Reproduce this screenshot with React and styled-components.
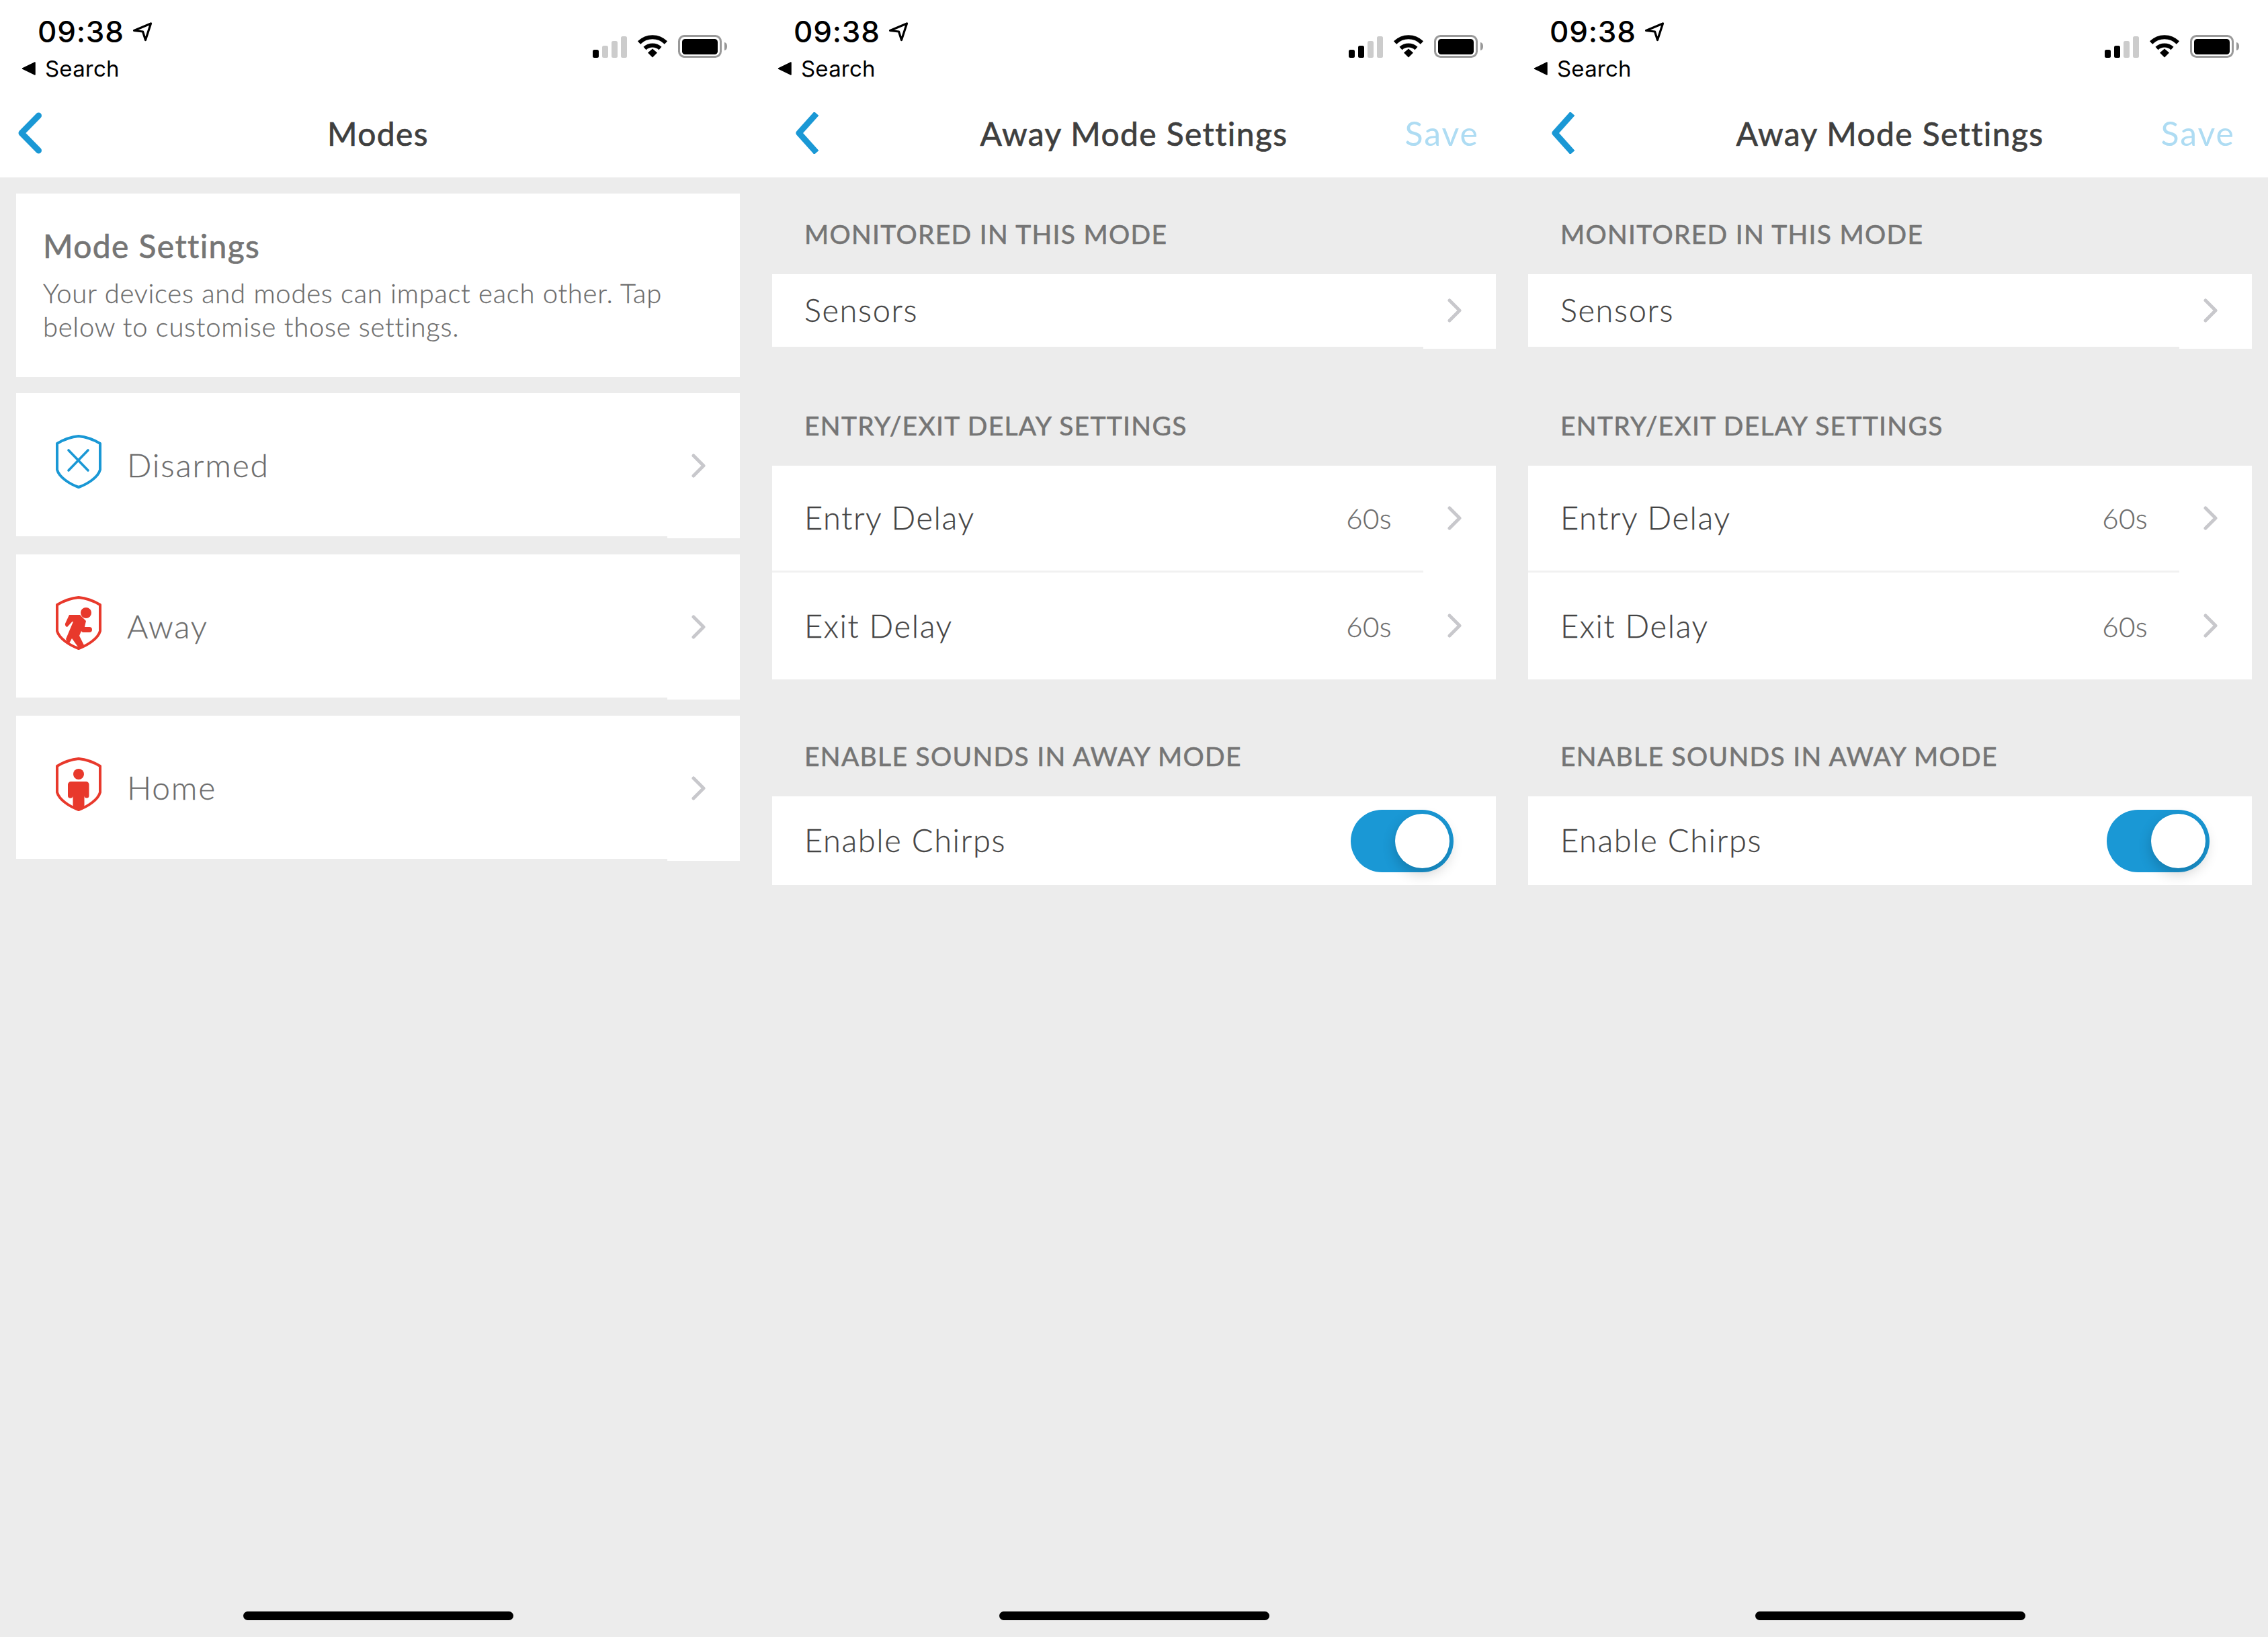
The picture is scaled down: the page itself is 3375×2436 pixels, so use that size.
import styled, { createGlobalStyle } from "styled-components";

const GlobalStyle = createGlobalStyle`
  html, body {
    margin: 0;
    padding: 0;
    background: #ececec;
  }
  * {
    box-sizing: border-box;
  }
`;

const BLUE = "#1a98d5";
const RED = "#e8392c";
const APP_FONT = `"Lato", "Open Sans", sans-serif`;

const Page = styled.div`
  display: flex;
  width: 3375px;
  height: 2436px;
  overflow: hidden;
  font-family: ${APP_FONT};
`;

const Panel = styled.section`
  display: flex;
  flex-direction: column;
  width: 1125px;
  height: 100%;
  background: #ececec;
`;

const TopBar = styled.header`
  display: flex;
  flex-direction: column;
  height: 264px;
  background: #ffffff;
`;

const StatusBar = styled.div`
  display: flex;
  justify-content: space-between;
  height: 140px;
  padding: 24px 43px 0 32px;
`;

const StatusLeft = styled.div`
  display: flex;
  flex-direction: column;
`;

const TimeRow = styled.div`
  display: flex;
  align-items: center;
  gap: 12px;
  height: 46px;
  padding-left: 24px;
`;

const Time = styled.span`
  font-family: Inter, sans-serif;
  font-size: 44px;
  font-weight: 500;
  line-height: 46px;
  letter-spacing: 0.8px;
  color: #000000;
`;

const BackToSearch = styled.div`
  display: flex;
  align-items: center;
  gap: 14px;
  height: 40px;
  margin-top: 12px;
`;

const SearchLabel = styled.span`
  font-family: Inter, sans-serif;
  font-size: 33px;
  font-weight: 400;
  line-height: 40px;
  letter-spacing: 0.2px;
  color: #000000;
`;

const StatusIcons = styled.div`
  display: flex;
  align-items: flex-end;
  gap: 15px;
  height: 34px;
  margin-top: 28px;
`;

const Signal = styled.div`
  display: flex;
  align-items: flex-end;
  gap: 5px;
  height: 32px;
`;

const SignalBar = styled.i`
  display: block;
  width: 9px;
  height: ${(p) => p.$height}px;
  border-radius: 2.5px;
  background: ${(p) => (p.$on ? "#000000" : "#cccccc")};
`;

const NavBar = styled.div`
  display: grid;
  grid-template-columns: 1fr auto 1fr;
  align-items: center;
  height: 124px;
  padding: 0 ${(p) => p.$backInset}px 6px;
`;

const BackIcon = styled.svg`
  margin-top: -2px;
`;

const Title = styled.h1`
  margin: 0;
  font-size: 48px;
  font-weight: 400;
  line-height: 60px;
  letter-spacing: 1.4px;
  color: #3f3f3f;
  -webkit-text-stroke: 0.7px #3f3f3f;
`;

const SaveLabel = styled.span`
  justify-self: end;
  margin-right: -8px;
  margin-top: -2px;
  font-size: 50px;
  font-weight: 400;
  line-height: 60px;
  letter-spacing: 2px;
  color: #aedcf3;
`;

const Body = styled.div`
  display: flex;
  flex-direction: column;
  gap: 24px;
  padding: 24px 24px 0;
`;

const SettingsBody = styled(Body)`
  gap: 54px;
`;

const IntroCard = styled.div`
  height: 273px;
  padding: 48px 40px 0;
  background: #ffffff;
`;

const IntroTitle = styled.h2`
  margin: 0 0 15px;
  font-size: 48px;
  font-weight: 400;
  line-height: 60px;
  letter-spacing: 1.4px;
  color: #757575;
  -webkit-text-stroke: 0.7px #757575;
`;

const IntroText = styled.p`
  margin: 0;
  font-size: 40px;
  font-weight: 300;
  line-height: 50px;
  letter-spacing: 0.73px;
  color: #6c6c6c;
  -webkit-text-stroke: 0.3px #6c6c6c;
`;

const Card = styled.div`
  background: #ffffff;
`;

const Row = styled.div`
  display: flex;
  align-items: center;
  height: ${(p) => p.$height}px;
  padding: 0 ${(p) => p.$right ?? 51}px 0 ${(p) => p.$left ?? 48}px;
`;

const Divider = styled.div`
  width: 969px;
  height: 3px;
  background: ${(p) => (p.$light ? "#f1f1f1" : "#ececec")};
`;

const ModeIcon = styled.svg`
  flex: none;
  width: 68px;
  height: 80px;
  margin: -9px 38px 0 0;
`;

const ModeLabel = styled.span`
  flex: 1;
  font-size: 48px;
  font-weight: 300;
  line-height: 60px;
  letter-spacing: 1.8px;
  color: #6c6c6c;
  -webkit-text-stroke: 0.3px #6c6c6c;
`;

const RowLabel = styled.span`
  flex: 1;
  margin-top: -2px;
  font-size: 47px;
  font-weight: 300;
  line-height: 60px;
  letter-spacing: 1.6px;
  color: #444444;
  -webkit-text-stroke: 0.3px #444444;
`;

const RowValue = styled.span`
  margin-right: 83px;
  font-size: 42px;
  font-weight: 300;
  line-height: 60px;
  letter-spacing: 0.4px;
  color: #6c6c6c;
  -webkit-text-stroke: 0.3px #6c6c6c;
`;

const SectionHeading = styled.h3`
  display: flex;
  align-items: center;
  height: 120px;
  margin: 0;
  padding-left: 48px;
  font-size: 39px;
  font-weight: 400;
  letter-spacing: 1.3px;
  color: #757575;
  -webkit-text-stroke: 0.6px #757575;
`;

const ChevronIcon = styled.svg`
  flex: none;
  width: 21px;
  height: 36px;
  margin-top: ${(p) => p.$shift ?? 0}px;
`;

const Toggle = styled.div`
  display: flex;
  justify-content: flex-end;
  width: 153px;
  height: 93px;
  padding: 6px;
  border-radius: 47px;
  background: ${BLUE};
`;

const Knob = styled.div`
  width: 81px;
  height: 81px;
  border-radius: 50%;
  background: #ffffff;
  box-shadow: 0 8px 20px rgba(0, 0, 0, 0.2);
`;

const HomeBar = styled.div`
  align-self: center;
  width: 402px;
  height: 13px;
  margin-top: auto;
  margin-bottom: 25px;
  border-radius: 7px;
  background: #000000;
`;

const LocationArrow = () => (
  <svg width="30" height="30" viewBox="0 0 30 30" fill="none">
    <path
      d="M2.5 13.5 27.5 3 19.5 27.5 15.5 15Z"
      stroke="#000"
      strokeWidth="3.2"
      strokeLinejoin="round"
    />
  </svg>
);

const BackTriangle = () => (
  <svg width="21" height="20" viewBox="0 0 21 20">
    <path d="M1.500 10 20 1V19Z" fill="#000" stroke="#000" strokeWidth="1.500" strokeLinejoin="round" />
  </svg>
);

const Wifi = () => (
  <svg width="46" height="34" viewBox="0 0 46 34" fill="none" stroke="#000">
    <path d="M3 11.5C14.5 .5 31.5 .5 43 11.5" strokeWidth="6" />
    <path d="M11.5 20C18 14 28 14 34.5 20" strokeWidth="6" />
    <path d="M16 26.5 23 20.5 30 26.5 23 33.5Z" fill="#000" stroke="none" />
  </svg>
);

const Battery = () => (
  <svg width="73" height="34" viewBox="0 0 73 34">
    <rect x="1.5" y="1.5" width="62" height="31" rx="8" fill="none" stroke="#999" strokeWidth="3" />
    <rect x="6" y="6" width="53" height="23" rx="4.5" fill="#000" />
    <path d="M69 11c3 .5 4 3 4 6s-1 5.500-4 6Z" fill="#999" />
  </svg>
);

const BackChevron = ({ rounded }) => (
  <BackIcon width="37" height="62" viewBox="0 0 37 62" fill="none">
    <path
      d={rounded ? "M30.500 5 5 31 30.500 57" : "M33 2 7 31 33 60"}
      stroke={BLUE}
      strokeWidth="9"
      strokeLinecap={rounded ? "round" : "butt"}
      strokeLinejoin="round"
    />
  </BackIcon>
);

const Chevron = ({ shift }) => (
  <ChevronIcon viewBox="0 0 21 36" fill="none" $shift={shift}>
    <path
      d="M3 3 18 18 3 33"
      stroke="#c8c8cc"
      strokeWidth="5"
      strokeLinecap="round"
      strokeLinejoin="round"
    />
  </ChevronIcon>
);

const SHIELD = "M34 2C23 3 12 7 2 13V52C5 63 20 73 34 78C48 73 63 63 66 52V13C56 7 45 3 34 2Z";

const Shield = ({ color, children }) => (
  <ModeIcon viewBox="0 0 68 80" fill="none">
    <path d={SHIELD} stroke={color} strokeWidth="4" strokeLinejoin="round" />
    {children}
  </ModeIcon>
);

const DisarmedIcon = () => (
  <Shield color={BLUE}>
    <path d="M19 23 48 53M48 23 19 53" stroke={BLUE} strokeWidth="3.6" strokeLinecap="round" />
  </Shield>
);

const AwayIcon = () => (
  <Shield color={RED}>
    <circle cx="45" cy="25" r="8" fill={RED} />
    <path d="M20 28H36L45 37 43 46H50A4 4 0 0 1 50 54H41A3 3 0 0 1 38 52L35 59 42 73 34 77 24 63 19 72 15 64 26 38H24.500L17 46A4 4 0 0 1 14 41Z" fill={RED} />
  </Shield>
);

const HomeIcon = () => (
  <Shield color={RED}>
    <circle cx="34" cy="25" r="8" fill={RED} />
    <path d="M23 36H45A4.500 4.500 0 0 1 49.500 40.500V57A3.500 3.500 0 0 1 42.500 57V73L34 78 25.500 73V57A3.500 3.500 0 0 1 18 57V40.500A4.500 4.500 0 0 1 23 36Z" fill={RED} />
  </Shield>
);

const PhoneTop = ({ bars, title, backInset, rounded, save }) => (
  <TopBar>
    <StatusBar>
      <StatusLeft>
        <TimeRow>
          <Time>09:38</Time>
          <LocationArrow />
        </TimeRow>
        <BackToSearch>
          <BackTriangle />
          <SearchLabel>Search</SearchLabel>
        </BackToSearch>
      </StatusLeft>
      <StatusIcons>
        <Signal>
          {[12, 18, 25, 32].map((h, i) => (
            <SignalBar key={h} $height={h} $on={i < bars} />
          ))}
        </Signal>
        <Wifi />
        <Battery />
      </StatusIcons>
    </StatusBar>
    <NavBar $backInset={backInset}>
      <BackChevron rounded={rounded} />
      <Title>{title}</Title>
      {save && <SaveLabel>Save</SaveLabel>}
    </NavBar>
  </TopBar>
);

const modes = [
  { label: "Disarmed", Icon: DisarmedIcon },
  { label: "Away", Icon: AwayIcon },
  { label: "Home", Icon: HomeIcon },
];

const ModesPanel = () => (
  <Panel>
    <PhoneTop bars={1} title="Modes" backInset={27} rounded />
    <Body>
      <IntroCard>
        <IntroTitle>Mode Settings</IntroTitle>
        <IntroText>
          Your devices and modes can impact each other. Tap
          <br />
          below to customise those settings.
        </IntroText>
      </IntroCard>
      {modes.map(({ label, Icon }) => (
        <Card key={label}>
          <Row $height={213} $left={59}>
            <Icon />
            <ModeLabel>{label}</ModeLabel>
            <Chevron shift={3} />
          </Row>
          <Divider />
        </Card>
      ))}
    </Body>
    <HomeBar />
  </Panel>
);

const SettingsPanel = () => (
  <Panel>
    <PhoneTop bars={2} title="Away Mode Settings" backInset={57} save />
    <SettingsBody>
      <div>
        <SectionHeading>MONITORED IN THIS MODE</SectionHeading>
        <Card>
          <Row $height={108}>
            <RowLabel>Sensors</RowLabel>
            <Chevron />
          </Row>
          <Divider />
        </Card>
      </div>
      <div>
        <SectionHeading>ENTRY/EXIT DELAY SETTINGS</SectionHeading>
        <Card>
          <Row $height={156}>
            <RowLabel>Entry Delay</RowLabel>
            <RowValue>60s</RowValue>
            <Chevron />
          </Row>
          <Divider $light />
          <Row $height={159}>
            <RowLabel>Exit Delay</RowLabel>
            <RowValue>60s</RowValue>
            <Chevron shift={-1} />
          </Row>
        </Card>
      </div>
      <div>
        <SectionHeading>ENABLE SOUNDS IN AWAY MODE</SectionHeading>
        <Card>
          <Row $height={132} $right={63}>
            <RowLabel>Enable Chirps</RowLabel>
            <Toggle>
              <Knob />
            </Toggle>
          </Row>
        </Card>
      </div>
    </SettingsBody>
    <HomeBar />
  </Panel>
);

const App = () => (
  <Page>
    <GlobalStyle />
    <ModesPanel />
    <SettingsPanel />
    <SettingsPanel />
  </Page>
);

export default App;
